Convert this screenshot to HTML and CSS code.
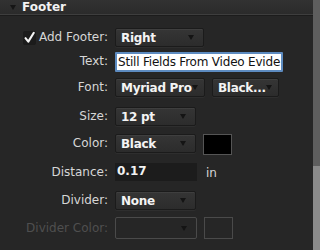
FILE: index.html
```html
<!DOCTYPE html>
<html>
<head>
<meta charset="utf-8">
<link rel="stylesheet" href="styles.css">
</head>
<body>
<div class="window">
  <div class="panel">
    <div class="header">
      <span class="disclosure"></span>
      <span class="title">Footer</span>
    </div>
    <div class="form">
      <div class="label check-label"><span class="checkbox"><svg width="13" height="14" viewBox="0 0 13 14"><path d="M2.5 7.2 L5.3 10.6 L10.8 1.8" fill="none" stroke="#f4f4f4" stroke-width="2.1" stroke-linecap="round" stroke-linejoin="round"/></svg></span>Add Footer:</div>
      <div class="ctrl"><div class="popup w89"><span>Right</span><i class="arrow"></i></div></div>

      <div class="label">Text:</div>
      <div class="ctrl"><div class="textfield">Still Fields From Video Evide</div></div>

      <div class="label">Font:</div>
      <div class="ctrl"><div class="popup w90"><span>Myriad Pro</span><i class="arrow"></i></div><div class="popup w67"><span>Black...</span><i class="arrow"></i></div></div>

      <div class="label">Size:</div>
      <div class="ctrl"><div class="popup w81"><span>12 pt</span><i class="arrow"></i></div></div>

      <div class="label">Color:</div>
      <div class="ctrl"><div class="popup w81"><span>Black</span><i class="arrow"></i></div><div class="swatch"></div></div>

      <div class="label">Distance:</div>
      <div class="ctrl"><div class="numfield">0.17</div><span class="unit">in</span></div>

      <div class="label">Divider:</div>
      <div class="ctrl"><div class="popup w81"><span>None</span><i class="arrow"></i></div></div>

      <div class="label disabled">Divider Color:</div>
      <div class="ctrl"><div class="popup w82 off"><span></span><i class="arrow"></i></div><div class="swatch off"></div></div>
    </div>
  </div>
  <div class="scrollbar"><div class="thumb"></div></div>
</div>
</body>
</html>
```
FILE: styles.css
```css
html, body {
  margin: 0;
  padding: 0;
  background: #262626;
  width: 320px;
  height: 250px;
  overflow: hidden;
  font-family: "DejaVu Sans", "Liberation Sans", sans-serif;
  font-size: 12px;
}
.window {
  display: flex;
  width: 320px;
  height: 250px;
}
.panel {
  flex: 1;
  display: flex;
  flex-direction: column;
  background: #262626;
}
.header {
  height: 14px;
  background: linear-gradient(#323232, #2b2b2b);
  border-bottom: 1px solid #3e3e3e;
  box-shadow: 0 1px 0 #1c1c1c;
  display: flex;
  align-items: center;
}
.disclosure {
  width: 0;
  height: 0;
  margin-left: 10px;
  margin-right: 6px;
  border-left: 3px solid transparent;
  border-right: 3px solid transparent;
  border-top: 5px solid #151515;
}
.title {
  color: #f2f2f2;
  font-weight: bold;
  font-size: 12px;
}
.form {
  display: grid;
  grid-template-columns: 108px 1fr;
  grid-template-rows: 24px 26px 29px 27px 29px 28px 26px 24px;
  column-gap: 7px;
  padding-top: 13px;
}
.label {
  color: #d6d6d6;
  text-align: right;
  height: 19px;
  line-height: 19px;
  white-space: nowrap;
}
.check-label {
  display: flex;
  justify-content: flex-end;
  align-items: center;
}
.checkbox {
  width: 13px;
  height: 14px;
  background: #1b1b1b;
  border-radius: 2px;
  margin-right: 3px;
  display: flex;
}
.label.disabled {
  color: #4f4f4f;
  line-height: 22px;
  height: 22px;
}
.ctrl {
  display: flex;
  align-items: flex-start;
  gap: 7px;
}
.popup {
  height: 19px;
  box-sizing: border-box;
  border: 1px solid #1b1b1b;
  border-radius: 2px;
  background: linear-gradient(#353535, #2c2c2c);
  box-shadow: 0 1px 0 rgba(255,255,255,0.04), inset 0 1px 0 rgba(255,255,255,0.05);
  display: flex;
  align-items: center;
  justify-content: space-between;
  padding: 0 9px 0 5px;
  color: #f4f4f4;
  font-weight: bold;
  white-space: nowrap;
  letter-spacing: -0.3px;
}
.popup.off {
  height: 22px;
  background: transparent;
  border: 1px solid #4a4a4a;
  box-shadow: none;
}
.w89 { width: 89px; }
.w90 { width: 90px; }
.w67 { width: 67px; }
.w81 { width: 81px; }
.w82 { width: 82px; }
.arrow {
  width: 0;
  height: 0;
  border-left: 3px solid transparent;
  border-right: 3px solid transparent;
  border-top: 5px solid #141414;
}
.textfield {
  width: 168px;
  height: 20px;
  box-sizing: border-box;
  background: #ffffff;
  border: 2px solid #5d8bc0;
  border-radius: 1px;
  color: #111;
  padding: 0 1px;
  line-height: 16px;
  white-space: nowrap;
  overflow: hidden;
  letter-spacing: -0.2px;
}
.numfield {
  width: 82px;
  height: 18px;
  box-sizing: border-box;
  background: #1c1c1c;
  color: #f2f2f2;
  font-weight: bold;
  padding-left: 2px;
  line-height: 16px;
}
.unit {
  color: #d6d6d6;
  line-height: 20px;
  margin-left: 2px;
}
.swatch {
  width: 29px;
  height: 21px;
  box-sizing: border-box;
  background: #000;
  border: 1px solid #555;
}
.swatch.off {
  height: 22px;
  background: transparent;
  border-color: #4a4a4a;
}
.scrollbar {
  width: 7px;
  background: #5e5e5e;
  display: flex;
  flex-direction: column;
  justify-content: flex-end;
}
.thumb {
  height: 84px;
  background: #8a8a8a;
}
```
